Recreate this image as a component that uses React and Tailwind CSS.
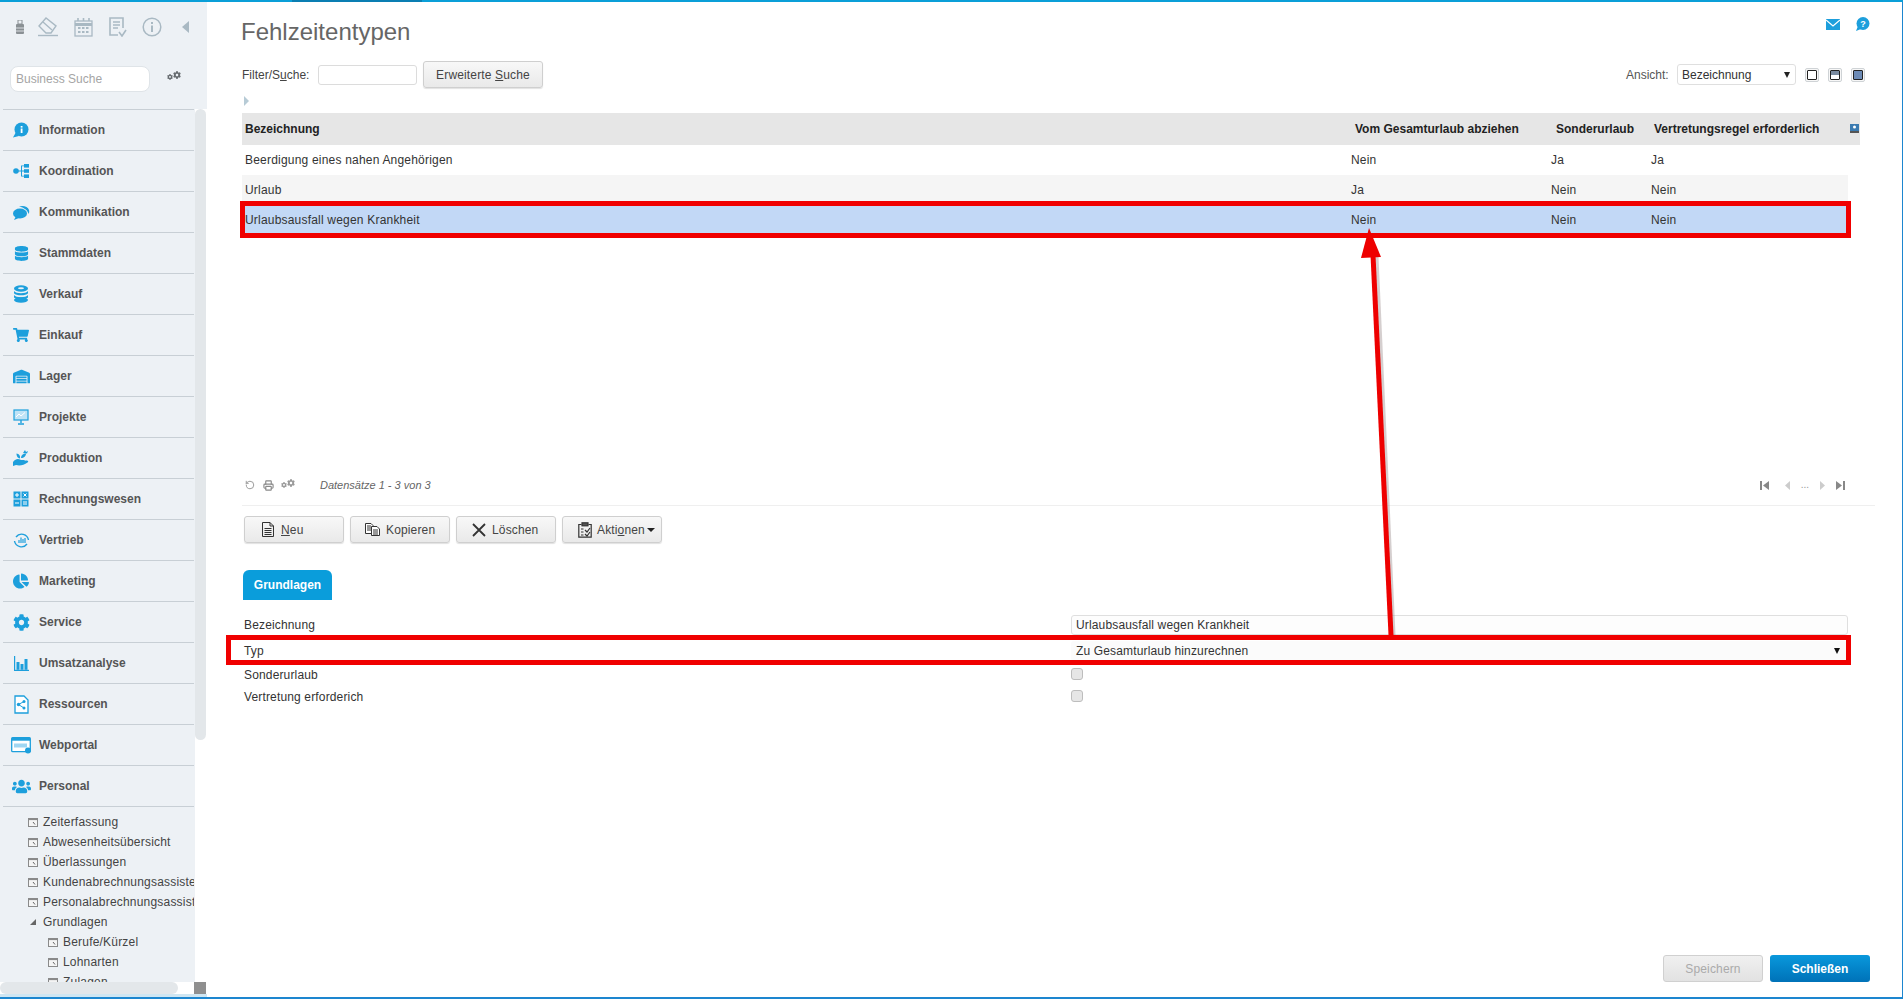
import React from "react";
import { FaDatabase, FaShoppingCart, FaWarehouse, FaUsers, FaCog, FaChartPie } from "react-icons/fa";
import { RotateCcw, Printer } from "lucide-react";

const BLUE = "#1d9fdc";

// Sidebar icons, drawn where the icon packages have no match
const InfoIcon = () => (
  <svg width="16" height="16" viewBox="0 0 16 16">
    <circle cx="8.5" cy="7.5" r="7" fill={BLUE} />
    <path d="M0 15.5 L3 10 L6 14 Z" fill={BLUE} />
    <rect x="7.7" y="6.5" width="1.8" height="4.5" fill="#fff" />
    <rect x="7.7" y="4" width="1.8" height="1.6" fill="#fff" />
  </svg>
);
const SitemapIcon = () => (
  <svg width="16" height="16" viewBox="0 0 16 16" fill={BLUE}>
    <circle cx="3" cy="8" r="2.8" />
    <rect x="11" y="1" width="5" height="3.6" />
    <rect x="11" y="6.2" width="5" height="3.6" />
    <rect x="11" y="11.4" width="5" height="3.6" />
    <path d="M5 7.5 H8 V2.4 H11 V3.2 H9 V7.5 H11 V8.5 H9 V12.8 H11 V13.6 H8 V8.5 H5 Z" />
  </svg>
);
const ChatIcon = () => (
  <svg width="17" height="15" viewBox="0 0 17 15" fill={BLUE}>
    <ellipse cx="7" cy="8.5" rx="7" ry="5" />
    <path d="M1 15 L3 11 L6 13 Z" />
    <path d="M6 1.5 C10 0 15 1.5 16 5 C16.5 7 16 8 15.5 9 C15 5.5 11 2.5 6 1.5 Z" />
  </svg>
);
const CoinsIcon = () => (
  <svg width="16" height="18" viewBox="0 0 16 18" fill={BLUE}>
    <ellipse cx="8" cy="3.5" rx="7" ry="3.3" />
    <path d="M1 6 C3 9 13 9 15 6 V8.2 C13 11 3 11 1 8.2 Z" />
    <path d="M1 10 C3 13 13 13 15 10 V12.4 C13 15 3 15 1 12.4 Z" />
    <ellipse cx="8" cy="15" rx="7" ry="2.8" />
    <ellipse cx="8" cy="3.3" rx="3" ry="1" fill="#edf1f5" />
  </svg>
);
const ScreenIcon = () => (
  <svg width="16" height="16" viewBox="0 0 16 16">
    <rect x="1" y="1" width="14" height="10" fill="#bfe3f6" stroke={BLUE} strokeWidth="1.2" />
    <path d="M3 8 L6 5 L8 7 L12 3.5" fill="none" stroke="#fff" strokeWidth="1" />
    <path d="M8 11 V14 M5 15 H11" stroke={BLUE} strokeWidth="1.4" />
  </svg>
);
const HandIcon = () => (
  <svg width="16" height="16" viewBox="0 0 16 16" fill={BLUE}>
    <path d="M0 12 C3 8.5 5 8.5 8 10 L11 10 C12 10 12 11.5 10.5 11.5 L8 11.5 L13 10.5 C15 10 16 11.5 14.5 12.5 C11 15 7 16 3 15 L0 16 Z" />
    <path d="M7 8.5 C4 8 3.5 5.5 3.5 3.5 C6 4 7.5 5.5 7 8.5 Z" />
    <path d="M8 8 C8 5 10 3.5 13 3.5 C13 6 11 8 8 8 Z" />
    <path d="M10 3 L12 0 L13 2 L15 1 L14 3.5 Z" />
  </svg>
);
const CalcIcon = () => (
  <svg width="16" height="16" viewBox="0 0 16 16">
    <rect x="0.5" y="0.5" width="7" height="7" fill={BLUE} />
    <rect x="8.5" y="0.5" width="7" height="7" fill={BLUE} />
    <rect x="0.5" y="8.5" width="7" height="7" fill={BLUE} />
    <rect x="8.5" y="8.5" width="7" height="7" fill={BLUE} />
    <path d="M2 4 H6 M4 2 V6 M10.5 2.5 L13.5 5.5 M13.5 2.5 L10.5 5.5 M2 12 H6 M10 11 H14 M10 13 H14" stroke="#fff" strokeWidth="1" />
  </svg>
);
const SalesIcon = () => (
  <svg width="17" height="17" viewBox="0 0 17 17" fill="none" stroke={BLUE}>
    <path d="M3 5 A7 7 0 0 1 15.5 8" strokeWidth="1.4" />
    <path d="M14 12 A7 7 0 0 1 1.5 9" strokeWidth="1.4" />
    <path d="M6 11 V8 M8 11 V5.5 M10 11 V7 M12 11 V6" strokeWidth="1.2" />
  </svg>
);
const BarsIcon = () => (
  <svg width="15" height="15" viewBox="0 0 15 15" fill={BLUE}>
    <rect x="0" y="0" width="1.2" height="15" />
    <rect x="0" y="13.8" width="15" height="1.2" />
    <rect x="2.5" y="6" width="3" height="7.8" />
    <rect x="6.5" y="8" width="3" height="5.8" />
    <rect x="10.5" y="3" width="3" height="10.8" />
  </svg>
);
const ShareFileIcon = () => (
  <svg width="15" height="19" viewBox="0 0 15 19">
    <path d="M1 1 H10 L14 5 V18 H1 Z" fill="#fff" stroke={BLUE} strokeWidth="1.3" />
    <path d="M4.5 9.5 L10 6.5 M4.5 9.5 L10 13" stroke={BLUE} strokeWidth="1" />
    <circle cx="4.5" cy="9.5" r="1.7" fill={BLUE} />
    <circle cx="10" cy="6.5" r="1.5" fill={BLUE} />
    <circle cx="10" cy="13" r="1.5" fill={BLUE} />
  </svg>
);
const BrowserIcon = () => (
  <svg width="21" height="17" viewBox="0 0 21 17">
    <rect x="0.7" y="0.7" width="18.6" height="14" rx="1" fill="#fff" stroke={BLUE} strokeWidth="1.3" />
    <rect x="0.7" y="0.7" width="18.6" height="3" fill={BLUE} />
    <rect x="3" y="6.5" width="13" height="4" fill="#9fd6f2" />
    <circle cx="17" cy="13.5" r="3" fill={BLUE} />
  </svg>
);
const LeafIcon = ({ icon: Icon, size }) => <Icon size={size} color={BLUE} />;

// small gear pair used by search and pager
const Gears = ({ color, className = "" }) => (
  <span className={`flex items-start ${className}`}>
    <FaCog size={6} color={color} className="mt-[3px]" />
    <FaCog size={8} color={color} />
  </span>
);

const navItems = [
  ["Information", <InfoIcon />],
  ["Koordination", <SitemapIcon />],
  ["Kommunikation", <ChatIcon />],
  ["Stammdaten", <LeafIcon icon={FaDatabase} size={15} />],
  ["Verkauf", <CoinsIcon />],
  ["Einkauf", <LeafIcon icon={FaShoppingCart} size={16} />],
  ["Lager", <LeafIcon icon={FaWarehouse} size={17} />],
  ["Projekte", <ScreenIcon />],
  ["Produktion", <HandIcon />],
  ["Rechnungswesen", <CalcIcon />],
  ["Vertrieb", <SalesIcon />],
  ["Marketing", <LeafIcon icon={FaChartPie} size={16} />],
  ["Service", <LeafIcon icon={FaCog} size={17} />],
  ["Umsatzanalyse", <BarsIcon />],
  ["Ressourcen", <ShareFileIcon />],
  ["Webportal", <BrowserIcon />],
  ["Personal", <LeafIcon icon={FaUsers} size={19} />],
];

const treeItems = [
  ["Zeiterfassung", 0],
  ["Abwesenheitsübersicht", 0],
  ["Überlassungen", 0],
  ["Kundenabrechnungsassistent", 0],
  ["Personalabrechnungsassistent", 0],
  ["Grundlagen", 0, true],
  ["Berufe/Kürzel", 1],
  ["Lohnarten", 1],
  ["Zulagen", 1],
];

const rows = [
  ["Beerdigung eines nahen Angehörigen", "Nein", "Ja", "Ja", "bg-white"],
  ["Urlaub", "Ja", "Nein", "Nein", "bg-[#f5f5f5]"],
  ["Urlaubsausfall wegen Krankheit", "Nein", "Nein", "Nein", "bg-[#c2d8f6]"],
];

function TreeIcon() {
  return (
    <svg width="10" height="9" viewBox="0 0 10 9" className="shrink-0">
      <rect x="0.5" y="0.5" width="9" height="8" fill="#f4f4f4" stroke="#8a8a8a" />
      <rect x="0.5" y="0.5" width="9" height="1.6" fill="#8a8a8a" />
      <path d="M5 4 L7 6.5" stroke="#666" strokeWidth="1" />
    </svg>
  );
}

function Sidebar() {
  return (
    <aside className="relative flex h-full w-[207px] shrink-0 flex-col overflow-hidden bg-[#edf1f5]">
      {/* toolbar */}
      <div className="flex h-[48px] items-center pt-[2px]">
        <svg width="8" height="14" viewBox="0 0 8 14" className="ml-[16px]" fill="#8a9094">
          <rect x="2" y="0" width="4" height="4" fill="none" stroke="#8a9094" />
          <rect x="0" y="4" width="8" height="10" rx="1" />
          <path d="M0 8 H8 M0 11 H8" stroke="#edf1f5" strokeWidth="0.8" />
        </svg>
        <svg width="21" height="20" viewBox="0 0 21 20" className="ml-[14px]" fill="none" stroke="#a9b9c3" strokeWidth="1.4">
          <path d="M1 9 L8 1 L18 9 L13 16 H8 Z" />
          <path d="M5 5 L14 13" />
          <path d="M0 18.5 H20" />
        </svg>
        <svg width="19" height="20" viewBox="0 0 19 20" className="ml-[15px]" fill="none" stroke="#a9b9c3" strokeWidth="1.3">
          <rect x="1" y="4" width="17" height="15" />
          <path d="M1 7.5 H18" strokeWidth="3" />
          <path d="M4 1 V4 M9.5 1 V4 M15 1 V4" strokeWidth="1.6" />
          <path d="M4 11 H15 M4 15 H15" strokeWidth="2" strokeDasharray="2.5 1.5" />
        </svg>
        <svg width="19" height="20" viewBox="0 0 19 20" className="ml-[15px]" fill="none" stroke="#a9b9c3" strokeWidth="1.6">
          <path d="M10 18 H2 V1 H15 V11" />
          <path d="M5 5 H12 M5 8 H12 M5 11 H10" />
          <path d="M11 15 L14 19 L18 13" />
        </svg>
        <svg width="20" height="20" viewBox="0 0 20 20" className="ml-[15px]">
          <circle cx="10" cy="10" r="8.8" fill="none" stroke="#a9b9c3" strokeWidth="1.5" />
          <rect x="9" y="8.5" width="2" height="6.5" fill="#a9b9c3" />
          <rect x="9" y="5" width="2" height="2" fill="#a9b9c3" />
        </svg>
        <span className="ml-[20px] h-0 w-0 border-y-[6px] border-r-[7px] border-y-transparent border-r-[#a9b9c3]" />
      </div>

      {/* business search */}
      <div className="mt-[16px] flex items-center">
        <input
          readOnly
          placeholder="Business Suche"
          className="ml-[10px] h-[26px] w-[140px] rounded-[8px] border border-[#dfe4e8] bg-white px-[5px] text-[12px] text-[#888] outline-none placeholder:text-[#a5a5a5]"
        />
        <Gears color="#666b6f" className="ml-[17px] -mt-[7px]" />
      </div>

      <div className="mt-[17px] flex min-h-0 flex-1">
        <div className="ml-[3px] w-[191px] overflow-hidden">
          {navItems.map(([label, icon]) => (
            <div key={label} className="flex h-[41px] items-center border-t border-[#c8cfd5]">
              <span className="flex w-[36px] shrink-0 justify-center">{icon}</span>
              <span className="text-[12px] font-bold text-[#555]">{label}</span>
            </div>
          ))}
          <div className="border-t border-[#c8cfd5] pt-[5px]">
            {treeItems.map(([label, level, open]) => (
              <div key={label} className={`flex h-[20px] items-center whitespace-nowrap text-[12px] tracking-[0.2px] text-[#444] ${level ? "pl-[45px]" : "pl-[25px]"}`}>
                {open ? (
                  <span className="ml-[2px] mr-[2px] h-0 w-0 shrink-0 border-b-[6px] border-l-[6px] border-b-[#666] border-l-transparent" />
                ) : (
                  <TreeIcon />
                )}
                <span className="ml-[5px]">{label}</span>
              </div>
            ))}
          </div>
        </div>
        {/* vertical scrollbar */}
        <div className="ml-[1px] w-[11px] bg-white">
          <div className="h-[631px] rounded-[6px] bg-[#e3e7ea]" />
        </div>
        <div className="w-[1px] bg-white" />
      </div>

      {/* horizontal scrollbar */}
      <div className="flex h-[12px] shrink-0 bg-white">
        <div className="h-full w-[178px] rounded-[6px] bg-[#e3e7ea]" />
        <div className="ml-[16px] h-full w-[12px] bg-[#8f8f8f]" />
      </div>
      <div className="h-[3px] shrink-0 bg-[#cfe6f2]" />
    </aside>
  );
}

function Btn({ icon, children, className = "justify-center" }) {
  return (
    <button className={`flex h-[27px] w-[100px] items-center rounded-[3px] border border-[#cfcfcf] bg-gradient-to-b from-[#f8f8f8] to-[#e9e9e9] text-[12px] tracking-[0.15px] text-[#444] shadow-[0_1px_1px_rgba(0,0,0,0.12)] ${className}`}>
      {icon}
      <span>{children}</span>
    </button>
  );
}

function ViewIcon({ fill }) {
  return (
    <span className="flex h-[14px] w-[14px] items-center justify-center rounded-[2px] border border-[#cfd3d6] bg-[#f7f7f7]">
      <span className={`h-[10px] w-[10px] rounded-[1px] border border-[#222] ${fill}`} />
    </span>
  );
}

function Main() {
  return (
    <main className="flex h-full min-w-0 flex-1 flex-col bg-white pl-[35px] pr-[32px]">
      <div className="flex h-[59px] items-start justify-between pt-[14px]">
        <h1 className="-ml-[1px] text-[24px] leading-[32px] text-[#666]">Fehlzeitentypen</h1>
        <div className="flex items-center gap-[15px] pt-[1px]">
          <svg width="14" height="11" viewBox="0 0 14 11">
            <rect width="14" height="11" fill={BLUE} />
            <path d="M0 1 L7 7 L14 1" fill="none" stroke="#fff" strokeWidth="1.2" />
          </svg>
          <svg width="15" height="14" viewBox="0 0 15 14">
            <circle cx="8" cy="6.5" r="6.5" fill={BLUE} />
            <path d="M1 14 L3 9 L6 12 Z" fill={BLUE} />
            <text x="8" y="10" fontSize="9" fontWeight="700" textAnchor="middle" fill="#fff" fontFamily="Liberation Sans, sans-serif">?</text>
          </svg>
        </div>
      </div>

      {/* filter row */}
      <div className="flex h-[27px] items-center">
        <span className="w-[76px] text-[12px] text-[#444]">Filter/S<u>u</u>che:</span>
        <input readOnly className="h-[20px] w-[99px] rounded-[3px] border border-[#dcdcdc] bg-white outline-none" />
        <Btn className="ml-[6px] w-[120px] justify-center">Erweiterte <u>S</u>uche</Btn>
        <div className="ml-auto mr-[5px] flex items-center">
          <span className="w-[51px] text-[12px] text-[#555]">Ansicht:</span>
          <div className="flex h-[21px] w-[119px] items-center justify-between rounded-[3px] border border-[#dfdfdf] bg-white pl-[4px] pr-[5px] text-[12px] text-[#333]">
            <span>Bezeichnung</span>
            <span className="mt-[1px] h-0 w-0 border-x-[3.5px] border-t-[6px] border-x-transparent border-t-[#222]" />
          </div>
          <span className="ml-[9px]"><ViewIcon fill="bg-white" /></span>
          <span className="ml-[9px]"><ViewIcon fill="bg-gradient-to-b from-[#7a8ba0] from-50% to-white to-50%" /></span>
          <span className="ml-[9px]"><ViewIcon fill="bg-[#6c8ab5]" /></span>
        </div>
      </div>

      <div className="flex h-[25px] items-center pl-[2px]">
        <span className="h-0 w-0 border-y-[5px] border-l-[5px] border-y-transparent border-l-[#b7cbd6]" />
      </div>

      {/* table */}
      <div className="h-[362px] w-[1618px] text-[12px] text-[#333]">
        <div className="flex h-[32px] items-center bg-[#e6e6e6] font-bold text-[#222]">
          <span className="w-[1109px] pl-[3px]">Bezeichnung</span>
          <span className="w-[200px] pl-[4px]">Vom Gesamturlaub abziehen</span>
          <span className="w-[100px] pl-[5px]">Sonderurlaub</span>
          <span className="w-[199px] pl-[3px]">Vertretungsregel erforderlich</span>
          <svg width="9" height="9" viewBox="0 0 9 9" className="-mt-[2px]">
            <rect width="9" height="7" fill="#3a7ab0" />
            <rect y="7" width="9" height="2" fill="#555" />
            <circle cx="4.5" cy="3" r="1.5" fill="#fff" />
          </svg>
        </div>
        {rows.map(([name, a, b, c, bg]) => (
          <div key={name} className={`flex h-[30px] w-[1606px] items-center tracking-[0.2px] ${bg}`}>
            <span className="w-[1109px] pl-[3px]">{name}</span>
            <span className="w-[200px]">{a}</span>
            <span className="w-[100px]">{b}</span>
            <span>{c}</span>
          </div>
        ))}
      </div>

      {/* pager */}
      <div className="flex h-[20px] items-center text-[#8a8a8a]">
        <RotateCcw size={10} className="ml-[3px]" strokeWidth={2} />
        <Printer size={11} className="ml-[8px]" strokeWidth={2.5} />
        <Gears color="#9a9a9a" className="ml-[7px] -mt-[3px]" />
        <span className="ml-[25px] text-[11px] italic text-[#666]">Datensätze 1 - 3 von 3</span>
        <div className="ml-auto mr-[25px] flex items-center gap-[11px] text-[#999]">
          <svg width="9" height="9" viewBox="0 0 9 9" fill="#888" className="mr-[5px]"><rect width="2" height="9" /><path d="M9 0 V9 L3 4.5 Z" /></svg>
          <svg width="5" height="9" viewBox="0 0 5 9" fill="#ccc"><path d="M5 0 V9 L0 4.5 Z" /></svg>
          <span className="text-[10px] leading-none text-[#999]">...</span>
          <svg width="5" height="9" viewBox="0 0 5 9" fill="#ccc"><path d="M0 0 V9 L5 4.5 Z" /></svg>
          <svg width="9" height="9" viewBox="0 0 9 9" fill="#888"><rect x="7" width="2" height="9" /><path d="M0 0 V9 L6 4.5 Z" /></svg>
        </div>
      </div>
      <div className="-mr-[5px] mt-[10px] h-px bg-[#efefef]" />

      {/* actions */}
      <div className="ml-[2px] mt-[10px] flex gap-[6px]">
        <Btn
          className="pl-[17px]"
          icon={
            <svg width="12" height="15" viewBox="0 0 12 15" fill="none" stroke="#333" strokeWidth="1" className="mr-[7px]">
              <path d="M0.5 0.5 H8 L11.5 4 V14.5 H0.5 Z M8 0.5 V4 H11.5" />
              <path d="M2.5 6.5 H9.5 M2.5 8.5 H9.5 M2.5 10.5 H9.5 M2.5 12.5 H9.5" />
            </svg>
          }
        >
          <u>N</u>eu
        </Btn>
        <Btn
          className="pl-[14px]"
          icon={
            <svg width="15" height="13" viewBox="0 0 15 13" fill="#fff" stroke="#333" strokeWidth="1" className="mr-[6px]">
              <path d="M0.5 0.5 H6 L8 2.5 V10.5 H0.5 Z" />
              <path d="M2 3 H6 M2 5 H6 M2 7 H6" />
              <path d="M6.5 3.5 H12 L14.5 6 V12.5 H6.5 Z" />
              <path d="M8 7 H13 M8 9 H13 M8 11 H13" />
            </svg>
          }
        >
          Kopieren
        </Btn>
        <Btn
          className="pl-[15px]"
          icon={
            <svg width="14" height="14" viewBox="0 0 14 14" stroke="#333" strokeWidth="1.8" className="mr-[6px]">
              <path d="M1 1 L13 13 M13 1 L1 13" />
            </svg>
          }
        >
          Löschen
        </Btn>
        <Btn
          className="pl-[15px]"
          icon={
            <svg width="14" height="16" viewBox="0 0 14 16" fill="none" stroke="#333" strokeWidth="1.2" className="mr-[5px] shrink-0">
              <path d="M3.5 2.5 H0.8 V15.2 H13.2 V2.5 H10.5" />
              <rect x="4" y="0.8" width="6" height="3" fill="#555" />
              <path d="M3 7 H5.5 M3 10 H5.5 M3 13 H5.5 M7 8 L9 10 L12 6 M7 12 L9 14 L12 10" />
            </svg>
          }
        >
          Akti<u>o</u>nen
          <span className="ml-[2px] inline-block h-0 w-0 border-x-[4px] border-t-[4px] border-x-transparent border-t-[#222] align-middle" />
        </Btn>
      </div>

      {/* tab */}
      <div className="ml-[1px] mt-[27px] flex h-[30px] w-[89px] items-center justify-center rounded-t-[6px] bg-[#0a9ddb] text-[12px] font-bold text-white">
        Grundlagen
      </div>

      {/* form */}
      <div className="ml-[2px] mt-[15px] text-[12px] tracking-[0.15px] text-[#333]">
        <div className="flex h-[20px] items-center">
          <span className="w-[827px]">Bezeichnung</span>
          <input readOnly value="Urlaubsausfall wegen Krankheit" className="h-[20px] w-[777px] rounded-[3px] border border-[#dfdfdf] bg-[#fdfdfd] px-[4px] text-[#333] outline-none" />
        </div>
        <div className="mt-[6px] flex h-[20px] items-center">
          <span className="w-[827px]">Typ</span>
          <div className="flex h-[20px] w-[777px] items-center justify-between rounded-[3px] bg-[#fbfbfb] pl-[5px] pr-[8px]">
            <span>Zu Gesamturlaub hinzurechnen</span>
            <span className="h-0 w-0 border-x-[3.5px] border-t-[6px] border-x-transparent border-t-[#111]" />
          </div>
        </div>
        <div className="mt-[3px] flex h-[22px] items-center">
          <span className="w-[827px]">Sonderurlaub</span>
          <input type="checkbox" readOnly className="-mt-[2px] h-[12px] w-[12px] appearance-none rounded-[3px] border border-[#bdbdbd] bg-[#e6e6e6]" />
        </div>
        <div className="flex h-[22px] items-center">
          <span className="w-[827px]">Vertretung erforderich</span>
          <input type="checkbox" readOnly className="-mt-[2px] h-[12px] w-[12px] appearance-none rounded-[3px] border border-[#bdbdbd] bg-[#e6e6e6]" />
        </div>
      </div>

      {/* footer */}
      <div className="mt-auto mb-[15px] flex justify-end gap-[7px]">
        <button className="h-[27px] w-[100px] rounded-[3px] border border-[#d0d0d0] bg-gradient-to-b from-[#f0f0f0] to-[#e2e2e2] text-[12px] tracking-[0.15px] text-[#aaa]">Speichern</button>
        <button className="h-[27px] w-[100px] rounded-[3px] bg-gradient-to-b from-[#0a98dc] to-[#0072b8] text-[12px] font-bold text-white">Schließen</button>
      </div>
    </main>
  );
}

export default function App() {
  return (
    <div className="relative flex h-[999px] w-[1903px] flex-col overflow-hidden bg-white font-['Liberation_Sans',Arial,sans-serif]">
      <div className="flex h-[2px] shrink-0 bg-[#0a9fd8]">
        <div className="ml-[292px] h-full w-[130px] bg-[#0a7eb2]" />
      </div>
      <div className="flex min-h-0 flex-1 border-r border-[#1d86cf]">
        <Sidebar />
        <Main />
      </div>
      <div className="h-[2px] shrink-0 bg-[#1d86cf]" />

      {/* red annotations laid over the screenshot */}
      <div className="pointer-events-none absolute left-[240px] top-[201px] h-[37px] w-[1611px] border-[5px] border-[#f00000]" />
      <div className="pointer-events-none absolute left-[226px] top-[635px] h-[30px] w-[1625px] border-[5px] border-[#f00000]" />
      <svg className="pointer-events-none absolute left-0 top-0" width="1903" height="999">
        <path d="M1393 635 L1376 257" stroke="#998888" strokeWidth="5" opacity="0.4" />
        <path d="M1391 635 L1373 255" stroke="#ee0000" strokeWidth="5" />
        <path d="M1369 228 L1381 257 L1361 258 Z" fill="#ee0000" />
      </svg>
    </div>
  );
}
